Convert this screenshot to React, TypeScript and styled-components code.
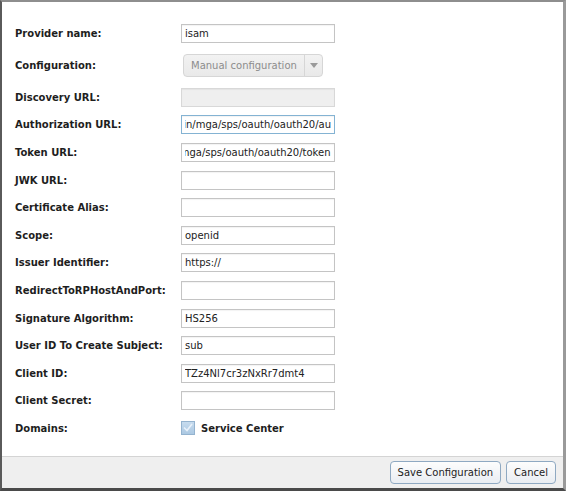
import { useEffect, useRef } from "react"
import styled, { createGlobalStyle } from "styled-components"

const GlobalStyle = createGlobalStyle`
  html, body {
    margin: 0;
    padding: 0;
    background: #fff;
  }
  * {
    box-sizing: border-box;
  }
`

const Dialog = styled.div`
  width: 566px;
  height: 491px;
  display: flex;
  flex-direction: column;
  background: #fff;
  border-top: 2px solid #8e8e8e;
  border-left: 2px solid #5a5a5a;
  border-right: 3px solid #9a9a9a;
  border-bottom: 3px solid #4a4a4a;
  font-family: "DejaVu Sans", Verdana, sans-serif;
  font-size: 10px;
  color: #222;
`

const Form = styled.div`
  flex: 1;
  padding: 18px 0 0 13px;
  display: flex;
  flex-direction: column;
`

const Row = styled.div<{ $tall?: boolean }>`
  display: grid;
  grid-template-columns: 166px 1fr;
  align-items: center;
  height: ${(p) => (p.$tall ? "36px" : "27.6px")};
`

const Label = styled.label`
  font-weight: bold;
  color: #1e1e1e;
  white-space: nowrap;
`

const TextInput = styled.input<{ $focused?: boolean }>`
  width: 154px;
  height: 19px;
  padding: 0 3px;
  border: 1px solid ${(p) => (p.$focused ? "#84b3d3" : "#c4c4c4")};
  border-radius: 0;
  background: #fff;
  box-shadow: inset 0 1px 1px rgba(0, 0, 0, 0.05);
  font-family: "DejaVu Sans", Verdana, sans-serif;
  font-size: 10px;
  color: #222;
  outline: none;
  &:disabled {
    background: #efefef;
    border-color: #d8d8d8;
  }
`

const Select = styled.div`
  width: 140px;
  height: 23px;
  margin-left: 2px;
  display: flex;
  align-items: stretch;
  border: 1px solid #d6d6d6;
  border-radius: 4px;
  background: linear-gradient(#f2f2f2, #e9e9e9);
  color: #8c8c8c;
`

const SelectText = styled.span`
  flex: 1;
  display: flex;
  align-items: center;
  padding-left: 7px;
  white-space: nowrap;
`

const SelectArrow = styled.span`
  width: 18px;
  display: flex;
  align-items: center;
  justify-content: center;
  border-left: 1px solid #d6d6d6;
`

const Check = styled.span`
  display: flex;
  align-items: center;
  gap: 6px;
  font-weight: bold;
  color: #1e1e1e;
`

const CheckBox = styled.span`
  width: 14px;
  height: 14px;
  display: flex;
  align-items: center;
  justify-content: center;
  border: 1px solid #94b3cf;
  background: linear-gradient(#c6dbee, #abc8e2);
  margin-top: -2px;
`

const Footer = styled.div`
  height: 32px;
  display: flex;
  align-items: center;
  justify-content: flex-end;
  gap: 5px;
  padding-right: 7px;
  background: #efefef;
  border-top: 1px solid #d4d4d4;
`

const Button = styled.button`
  height: 23px;
  padding: 0 7px;
  border: 1px solid #8fa9c2;
  border-radius: 4px;
  background: linear-gradient(#fdfdfd, #e9edf2);
  font-family: "DejaVu Sans", Verdana, sans-serif;
  font-size: 10px;
  color: #222;
`

function Field({ value, focused, disabled, scrollEnd }: { value?: string; focused?: boolean; disabled?: boolean; scrollEnd?: boolean }) {
  const ref = useRef<HTMLInputElement>(null)
  useEffect(() => {
    if (scrollEnd && ref.current) ref.current.scrollLeft = ref.current.scrollWidth
  }, [scrollEnd])
  return <TextInput ref={ref} defaultValue={value} $focused={focused} disabled={disabled} />
}

const rows: { label: string; value?: string }[] = [
  { label: "JWK URL:" },
  { label: "Certificate Alias:" },
  { label: "Scope:", value: "openid" },
  { label: "Issuer Identifier:", value: "https://" },
  { label: "RedirectToRPHostAndPort:" },
  { label: "Signature Algorithm:", value: "HS256" },
  { label: "User ID To Create Subject:", value: "sub" },
  { label: "Client ID:", value: "TZz4Nl7cr3zNxRr7dmt4" },
  { label: "Client Secret:" },
]

function App() {
  return (
    <>
      <GlobalStyle />
      <Dialog>
        <Form>
          <Row>
            <Label>Provider name:</Label>
            <Field value="isam" />
          </Row>
          <Row $tall>
            <Label>Configuration:</Label>
            <Select>
              <SelectText>Manual configuration</SelectText>
              <SelectArrow>
                <svg width="8" height="5" viewBox="0 0 8 5">
                  <path d="M0 0h8L4 5z" fill="#9a9a9a" />
                </svg>
              </SelectArrow>
            </Select>
          </Row>
          <Row>
            <Label>Discovery URL:</Label>
            <Field disabled />
          </Row>
          <Row>
            <Label>Authorization URL:</Label>
            <Field value="https://isam.domain/mga/sps/oauth/oauth20/au" focused scrollEnd />
          </Row>
          <Row>
            <Label>Token URL:</Label>
            <Field value="https://isam.domain/mga/sps/oauth/oauth20/token" scrollEnd />
          </Row>
          {rows.map((r) => (
            <Row key={r.label}>
              <Label>{r.label}</Label>
              <Field value={r.value} />
            </Row>
          ))}
          <Row>
            <Label>Domains:</Label>
            <Check>
              <CheckBox>
                <svg width="10" height="9" viewBox="0 0 10 9">
                  <path d="M1 4.5l3 3L9 1" stroke="#e8f1fa" strokeWidth="1.6" fill="none" />
                </svg>
              </CheckBox>
              Service Center
            </Check>
          </Row>
        </Form>
        <Footer>
          <Button>Save Configuration</Button>
          <Button>Cancel</Button>
        </Footer>
      </Dialog>
    </>
  )
}

export default App
